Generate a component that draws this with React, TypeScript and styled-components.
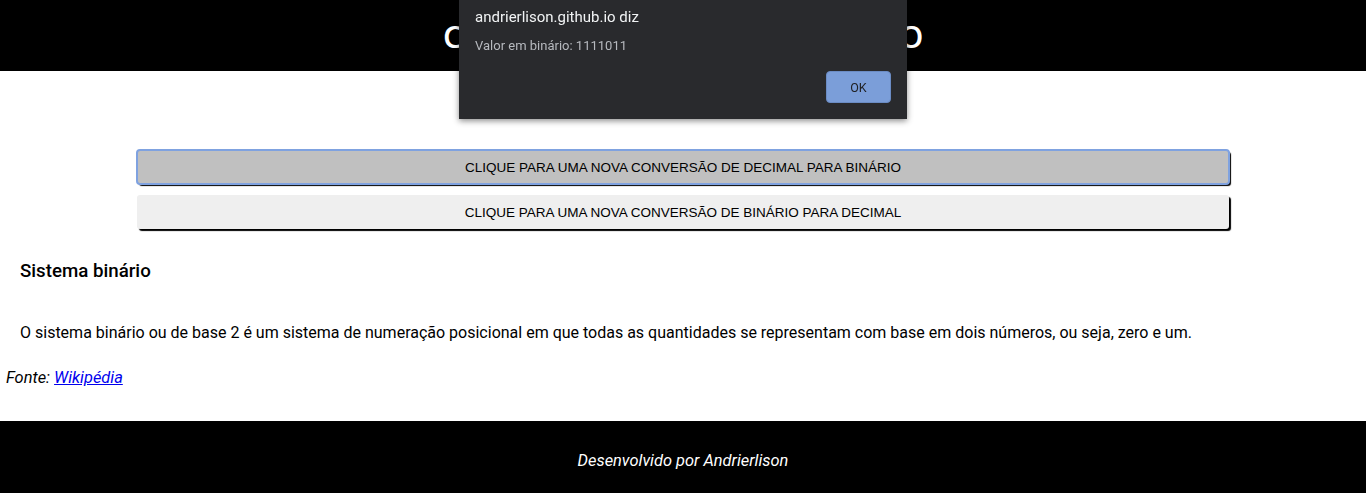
import React from "react";
import styled, { createGlobalStyle } from "styled-components";

const Global = createGlobalStyle`
  html, body { margin: 0; padding: 0; background: #fff; }
  body { font-family: Roboto, "Noto Sans", sans-serif; color: #000; }
  * { box-sizing: border-box; }
`;

const Page = styled.div`
  display: flex;
  flex-direction: column;
  min-height: 493px;
`;

const Header = styled.header`
  height: 71px;
  background: #000;
  display: flex;
  align-items: center;
  justify-content: center;
`;

const Title = styled.h1`
  margin: 0;
  font-family: "Open Sans", sans-serif;
  font-weight: 600;
  font-size: 31px;
  letter-spacing: -0.2px;
  color: #fff;
`;

const Main = styled.main`
  flex: 1;
  display: flex;
  flex-direction: column;
`;

const ButtonColumn = styled.div`
  display: flex;
  flex-direction: column;
  align-items: center;
  gap: 11px;
  margin-top: 79px;
`;

const ConvertButton = styled.button<{ $active?: boolean }>`
  width: 80%;
  height: 34px;
  border: none;
  border-radius: 3px;
  background: ${(p) => (p.$active ? "#c0c0c0" : "#efefef")};
  box-shadow: 2px 2px 1px #000;
  font-family: "Liberation Sans", Arial, sans-serif;
  font-size: 13.5px;
  color: #000;
  text-transform: uppercase;
  cursor: pointer;
  outline: ${(p) => (p.$active ? "2px solid #7fa2e0" : "none")};
  outline-offset: -1px;
`;

const Article = styled.section`
  padding: 0 20px;
  margin-top: 31px;
`;

const Heading = styled.h3`
  margin: 0;
  font-size: 18.72px;
  font-weight: 500;
`;

const Paragraph = styled.p`
  margin: 41px 0 0;
  font-size: 16px;
`;

const Source = styled.p`
  margin: 26px 0 0;
  padding-left: 6px;
  font-size: 16.4px;
  font-style: italic;
`;

const Link = styled.a`
  color: #0000ee;
  text-decoration: underline;
`;

const Footer = styled.footer`
  height: 72px;
  margin-top: auto;
  padding-top: 6px;
  background: #000;
  display: flex;
  align-items: center;
  justify-content: center;
  color: #fff;
  font-style: italic;
  font-size: 16.4px;
`;

const Dialog = styled.div`
  position: fixed;
  top: 0;
  left: 50%;
  transform: translateX(-50%);
  width: 448px;
  height: 119px;
  background: #292a2d;
  box-shadow: 0 2px 6px rgba(0, 0, 0, 0.45);
  padding: 8px 16px 0;
  display: flex;
  flex-direction: column;
  font-family: Roboto, "Noto Sans", sans-serif;
`;

const DialogTitle = styled.div`
  color: #f1f3f4;
  font-size: 15px;
  line-height: 18px;
`;

const DialogMessage = styled.div`
  margin-top: 12px;
  color: #b6b9be;
  font-size: 13px;
  line-height: 16px;
`;

const DialogActions = styled.div`
  display: flex;
  justify-content: flex-end;
  margin-top: 17px;
`;

const OkButton = styled.button`
  width: 65px;
  height: 32px;
  border: 1px solid #6b8cc4;
  border-radius: 4px;
  background: #7b9ed9;
  color: #202124;
  font-family: Roboto, "Noto Sans", sans-serif;
  font-size: 12.5px;
`;

export default function App() {
  return (
    <>
      <Global />
      <Page>
        <Header>
          <Title>CONVERSOR DECIMAL / BINÁRIO</Title>
        </Header>
        <Main>
          <ButtonColumn>
            <ConvertButton $active>Clique para uma nova conversão de decimal para binário</ConvertButton>
            <ConvertButton>Clique para uma nova conversão de binário para decimal</ConvertButton>
          </ButtonColumn>
          <Article>
            <Heading>Sistema binário</Heading>
            <Paragraph>
              O sistema binário ou de base 2 é um sistema de numeração posicional em que todas as quantidades se
              representam com base em dois números, ou seja, zero e um.
            </Paragraph>
          </Article>
          <Source>
            Fonte: <Link href="#">Wikipédia</Link>
          </Source>
        </Main>
        <Footer>Desenvolvido por Andrierlison</Footer>
      </Page>
      <Dialog>
        <DialogTitle>andrierlison.github.io diz</DialogTitle>
        <DialogMessage>Valor em binário: 1111011</DialogMessage>
        <DialogActions>
          <OkButton>OK</OkButton>
        </DialogActions>
      </Dialog>
    </>
  );
}
